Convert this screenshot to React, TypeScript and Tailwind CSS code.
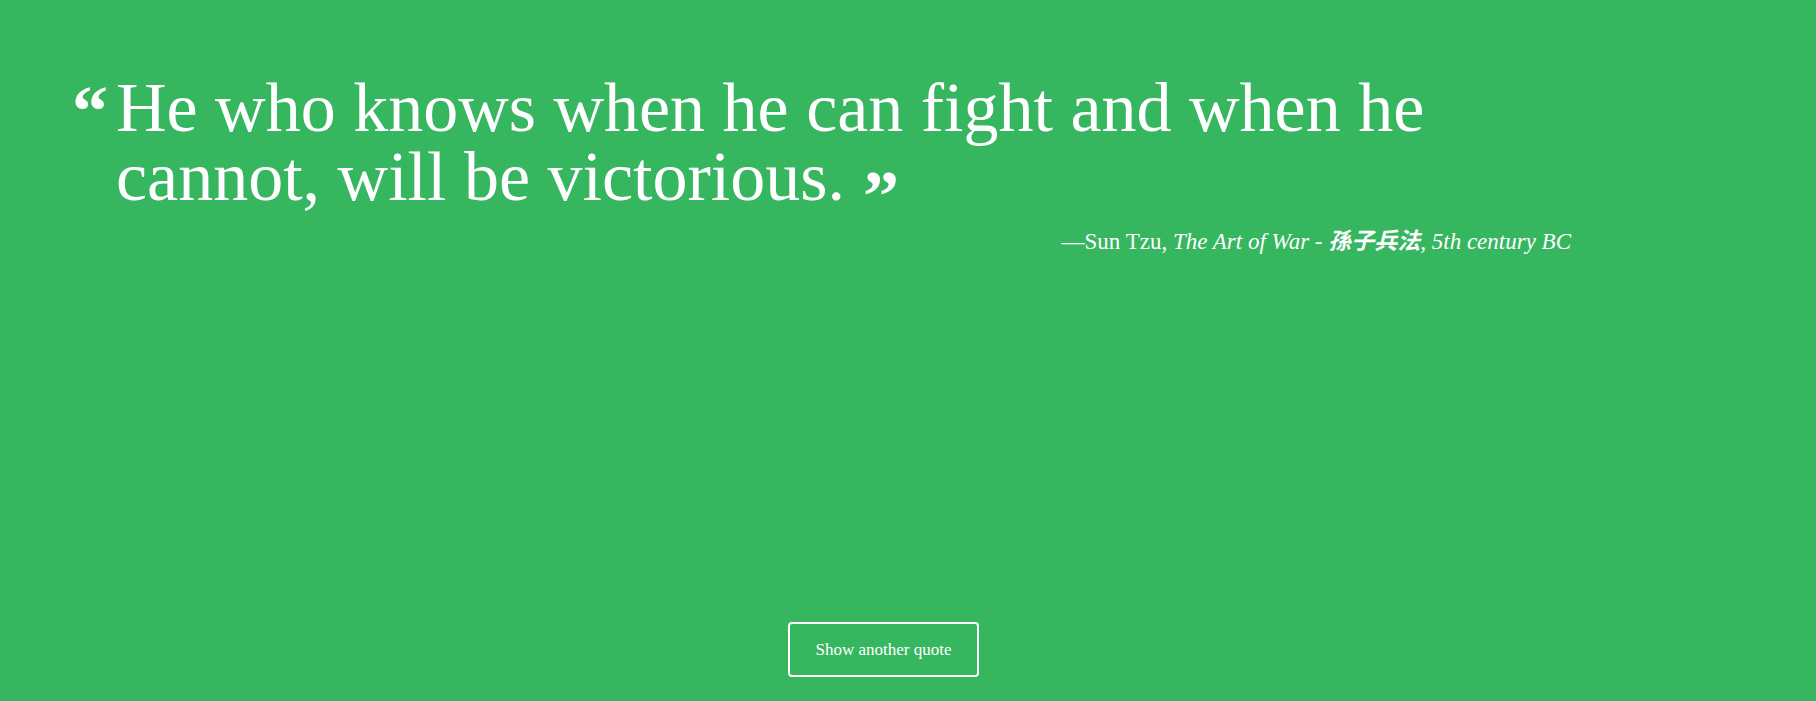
export default function App() {
  return (
    <div className="min-h-screen h-[701px] w-full bg-[#37b660] text-white flex flex-col font-['Liberation_Serif',serif]">
      <div className="pl-[72px] pr-[245px] pt-[73px]">
        <blockquote className="flex items-start">
          <span className="w-[44px] shrink-0 text-[72px] leading-[69px] font-bold mt-[4px]">“</span>
          <p className="text-[70px] leading-[69px]">
            He who knows when he can fight and when he cannot, will be victorious.
            <span className="ml-[18px] text-[72px] leading-[40px] font-bold align-[-20px]">”</span>
          </p>
        </blockquote>
        <p className="mt-[9px] text-right text-[23px] leading-[28px]">
          —Sun Tzu,{" "}
          <cite className="italic">
            The Art of War -{" "}
            <span className="font-bold font-['Noto_Sans_CJK_TC','Noto_Sans_CJK_SC',sans-serif]">孫子兵法</span>, 5th century BC
          </cite>
        </p>
      </div>
      <div className="mt-auto pb-[24px] flex justify-center pr-[49px]">
        <button className="w-[191px] h-[55px] border-2 border-white rounded-[4px] text-[17px] text-white">
          Show another quote
        </button>
      </div>
    </div>
  );
}
